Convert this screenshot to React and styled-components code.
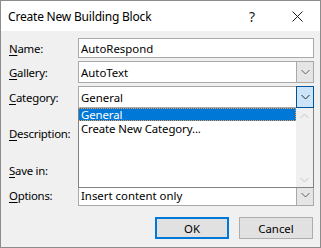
import React from 'react';
import styled, {createGlobalStyle} from "styled-components";

const Global = createGlobalStyle`
    html, body {
        margin: 0;
        padding: 0;
        background: #ffffff;
    }
    * {
        box-sizing: border-box;
    }
`

const Window = styled.div`
    width: 321px;
    height: 248px;
    border: 1px solid #8c8c8c;
    display: flex;
    flex-direction: column;
    font-family: "Noto Sans", "Open Sans", sans-serif;
    font-size: 11.4px;
    color: #000000;
    background: #f0f0f0;
    overflow: hidden;
`
const TitleBar = styled.div`
    height: 30px;
    flex: none;
    display: flex;
    align-items: center;
    background: #ffffff;
`
const Title = styled.span`
    flex: 1;
    padding-left: 7px;
    font-size: 12px;
    letter-spacing: -0.2px;
`
const TitleButton = styled.div`
    width: ${p => p.$w}px;
    height: 30px;
    display: flex;
    align-items: center;
    justify-content: center;
    font-size: 14px;
    color: #1a1a1a;
`
const Body = styled.div`
    flex: 1;
    display: flex;
    flex-direction: column;
    padding: 7px 6px 8px 7px;
`
const Row = styled.div`
    display: flex;
    align-items: center;
    height: ${p => p.$h}px;
    margin-bottom: ${p => p.$gap ?? 3}px;
    position: relative;
`
const Label = styled.span`
    width: 70px;
    flex: none;
    padding-left: 1px;
    letter-spacing: -0.25px;
`
const Key = styled.span`
    text-decoration: underline;
    text-underline-offset: 2px;
`
const Field = styled.div`
    flex: 1;
    height: 100%;
    display: flex;
    align-items: stretch;
    background: #ffffff;
    border: 1px solid #a9a9a9;
    position: relative;
`
const FieldText = styled.span`
    flex: 1;
    display: flex;
    align-items: center;
    padding-left: 2px;
`
const DropButton = styled.div`
    width: 18px;
    flex: none;
    display: flex;
    align-items: center;
    justify-content: center;
    margin: -1px -1px -1px 0;
    background: ${p => p.$active ? '#cce4f7' : '#e5e5e5'};
    border: 1px solid ${p => p.$active ? '#005499' : '#a9a9a9'};
`
const ListBox = styled.div`
    position: absolute;
    left: 70px;
    right: 0;
    top: 100%;
    height: 80px;
    background: #ffffff;
    border: 1px solid #828282;
    border-top: none;
    display: flex;
    z-index: 2;
`
const Items = styled.div`
    flex: 1;
    display: flex;
    flex-direction: column;
`
const Item = styled.div`
    height: 13px;
    flex: none;
    display: flex;
    align-items: center;
    padding-left: 2px;
    margin-bottom: 1px;
    letter-spacing: -0.1px;
    color: ${p => p.$selected ? '#ffffff' : '#000000'};
    background: ${p => p.$selected ? '#0078d7' : 'transparent'};
    border: 1px dotted ${p => p.$selected ? '#f79a45' : 'transparent'};
    border-left: none;
`
const ScrollBar = styled.div`
    width: 17px;
    flex: none;
    background: #f0f0f0;
    display: flex;
    flex-direction: column;
    justify-content: space-between;
    align-items: center;
    padding: 5px 0 4px;
`
const Buttons = styled.div`
    display: flex;
    justify-content: flex-end;
    gap: 10px;
    margin-top: 11px;
    padding-right: 1px;
`
const Button = styled.div`
    width: 74px;
    height: 22px;
    display: flex;
    align-items: center;
    justify-content: center;
    background: #e1e1e1;
    border: ${p => p.$default ? '2px solid #0078d7' : '1px solid #adadad'};
`

const Chevron = ({up, color = '#606060'}) => (
    <svg width="9" height="6" viewBox="0 0 9 6">
        <path d={up ? "M0.5 5 L4.5 1 L8.5 5" : "M0.5 1 L4.5 5 L8.5 1"} fill="none" stroke={color} strokeWidth="1"/>
    </svg>
)

const Close = () => (
    <svg width="11" height="11" viewBox="0 0 11 11">
        <path d="M0.5 0.5 L10.5 10.5 M10.5 0.5 L0.5 10.5" stroke="#1a1a1a" strokeWidth="1"/>
    </svg>
)

const App = () => {
    return (
        <>
            <Global/>
            <Window>
                <TitleBar>
                    <Title>Create New Building Block</Title>
                    <TitleButton $w={44}>?</TitleButton>
                    <TitleButton $w={46}><Close/></TitleButton>
                </TitleBar>
                <Body>
                    <Row $h={20}>
                        <Label><Key>N</Key>ame:</Label>
                        <Field><FieldText>AutoRespond</FieldText></Field>
                    </Row>
                    <Row $h={22}>
                        <Label><Key>G</Key>allery:</Label>
                        <Field>
                            <FieldText>AutoText</FieldText>
                            <DropButton><Chevron/></DropButton>
                        </Field>
                    </Row>
                    <Row $h={22}>
                        <Label><Key>C</Key>ategory:</Label>
                        <Field>
                            <FieldText>General</FieldText>
                            <DropButton $active><Chevron color="#2b2b2b"/></DropButton>
                        </Field>
                        <ListBox>
                            <Items>
                                <Item $selected>General</Item>
                                <Item>Create New Category...</Item>
                            </Items>
                            <ScrollBar>
                                <Chevron up color="#c2c2c2"/>
                                <Chevron color="#c2c2c2"/>
                            </ScrollBar>
                        </ListBox>
                    </Row>
                    <Row $h={45}>
                        <Label><Key>D</Key>escription:</Label>
                        <Field/>
                    </Row>
                    <Row $h={22}>
                        <Label><Key>S</Key>ave in:</Label>
                        <Field/>
                    </Row>
                    <Row $h={22} $gap={0}>
                        <Label><Key>O</Key>ptions:</Label>
                        <Field>
                            <FieldText>Insert content only</FieldText>
                            <DropButton><Chevron/></DropButton>
                        </Field>
                    </Row>
                    <Buttons>
                        <Button $default>OK</Button>
                        <Button>Cancel</Button>
                    </Buttons>
                </Body>
            </Window>
        </>
    );
};

export default App;
